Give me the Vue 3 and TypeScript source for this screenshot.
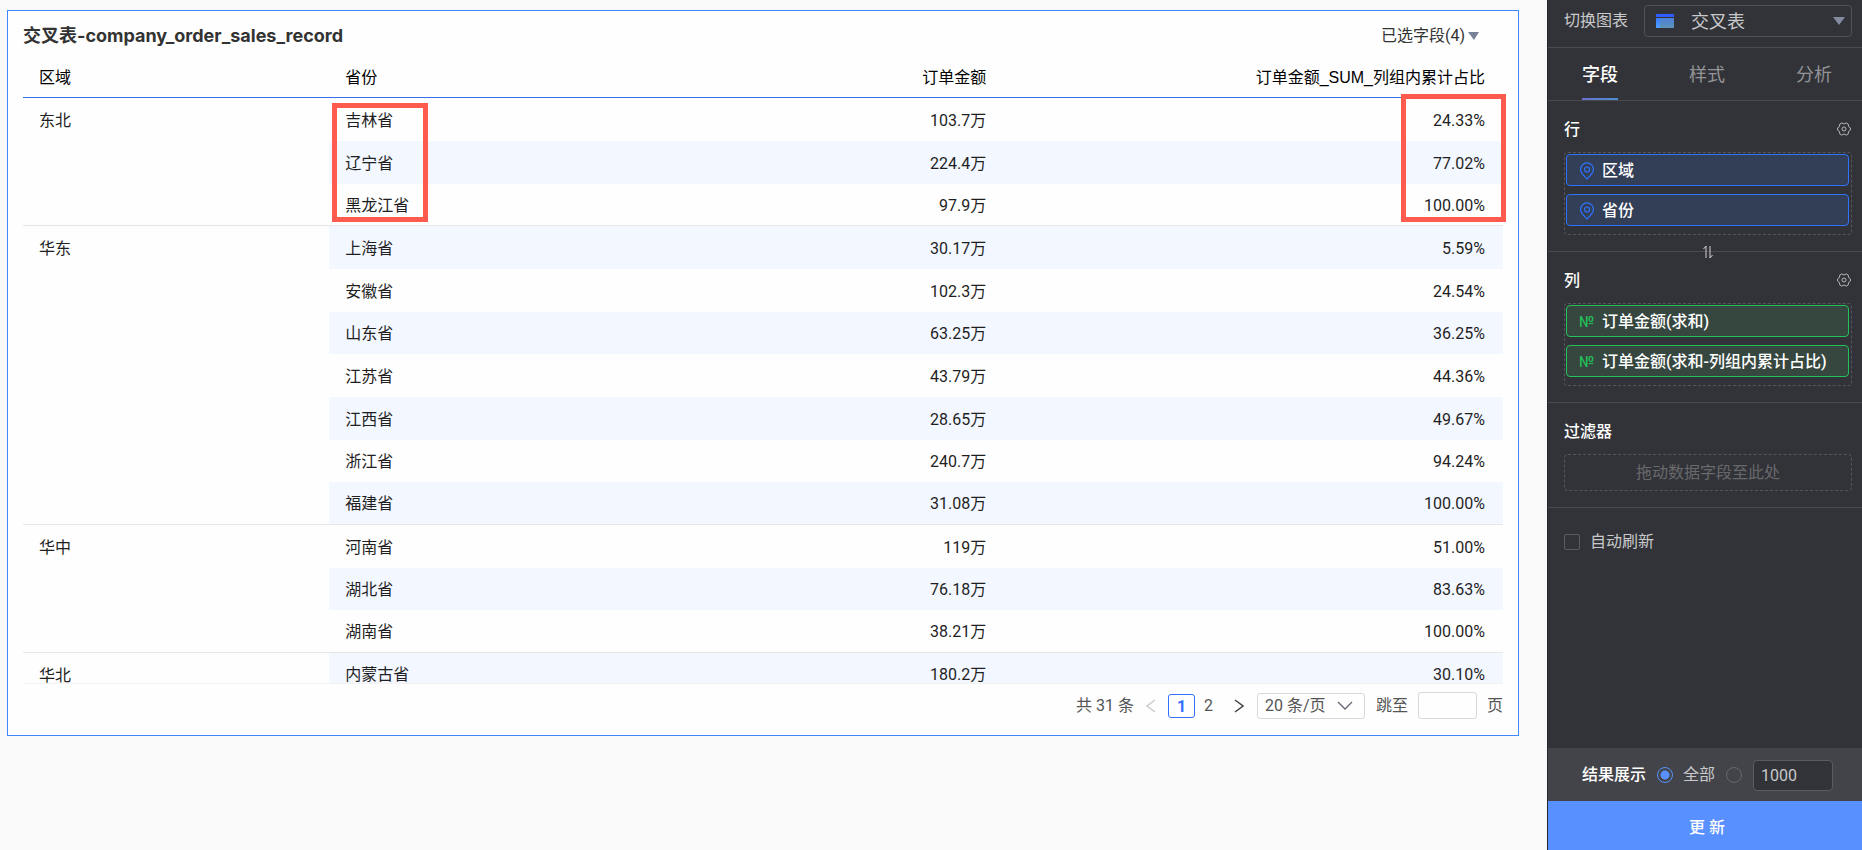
<script setup lang="ts">
import { computed, ref } from 'vue'

interface Province { name: string; amount: string; ratio: string }
interface Region { name: string; provinces: Province[] }

const p = (name: string, amount: string, ratio: string): Province => ({ name, amount, ratio })

const regions: Region[] = [
  { name: '东北', provinces: [p('吉林省', '103.7万', '24.33%'), p('辽宁省', '224.4万', '77.02%'), p('黑龙江省', '97.9万', '100.00%')] },
  {
    name: '华东',
    provinces: [
      p('上海省', '30.17万', '5.59%'), p('安徽省', '102.3万', '24.54%'), p('山东省', '63.25万', '36.25%'),
      p('江苏省', '43.79万', '44.36%'), p('江西省', '28.65万', '49.67%'), p('浙江省', '240.7万', '94.24%'),
      p('福建省', '31.08万', '100.00%'),
    ],
  },
  { name: '华中', provinces: [p('河南省', '119万', '51.00%'), p('湖北省', '76.18万', '83.63%'), p('湖南省', '38.21万', '100.00%')] },
  { name: '华北', provinces: [p('内蒙古省', '180.2万', '30.10%')] },
]

const rows = computed(() =>
  regions.flatMap((r) =>
    r.provinces.map((item, i) => ({
      ...item,
      region: i === 0 ? r.name : '',
      span: r.provinces.length,
      last: i === r.provinces.length - 1,
    })),
  ),
)

const gearPath =
  'M13.400 5.900v2.200L11.600 9.400 11.200 12 9.200 13.100 7 12 4.800 13.100 2.800 12 2.400 9.400.6 8.100V5.900l1.800-1.300L2.800 2 4.800.9 7 2 9.200.9l2 1.100.4 2.600z'

const tabs = ['字段', '样式', '分析']
const activeTab = ref('字段')
const dimensions = ['区域', '省份']
const measures = ['订单金额(求和)', '订单金额(求和-列组内累计占比)']
const autoRefresh = ref(false)
const resultMode = ref('all')
const limit = ref('1000')
const jump = ref('')
</script>

<template>
  <div class="page">
    <main class="canvas">
      <section class="card">
        <header class="card-head">
          <h1>交叉表-company_order_sales_record</h1>
          <button class="picked" type="button">
            已选字段(4)
            <svg width="12" height="8" viewBox="0 0 12 8"><path d="M0 0h11L6 8z" fill="#778096" /></svg>
          </button>
        </header>
        <div class="table-area">
          <div class="table-view">
            <table>
              <colgroup><col class="c-region" /><col class="c-prov" /><col class="c-amount" /><col class="c-ratio" /></colgroup>
              <thead>
                <tr><th>区域</th><th>省份</th><th class="num">订单金额</th><th class="num">订单金额_SUM_列组内累计占比</th></tr>
              </thead>
              <tbody>
                <tr v-for="row in rows" :key="row.name" :class="{ last: row.last }">
                  <td v-if="row.region" :rowspan="row.span" class="region">{{ row.region }}</td>
                  <td class="v">{{ row.name }}</td>
                  <td class="v num">{{ row.amount }}</td>
                  <td class="v num">{{ row.ratio }}</td>
                </tr>
              </tbody>
            </table>
          </div>
          <div class="mark mark-prov"></div>
          <div class="mark mark-ratio"></div>
        </div>
        <nav class="pager" aria-label="分页">
          <span>共 31 条</span>
          <button class="arrow off" type="button" aria-label="上一页" disabled>
            <svg width="10" height="14" viewBox="0 0 10 14"><path d="M9 1 1 7l8 6" /></svg>
          </button>
          <button class="num-btn current" type="button">1</button>
          <button class="num-btn" type="button">2</button>
          <button class="arrow next" type="button" aria-label="下一页">
            <svg width="10" height="14" viewBox="0 0 10 14"><path d="m1 1 8 6-8 6" /></svg>
          </button>
          <span class="size">
            <select aria-label="每页条数"><option>20 条/页</option></select>
            <svg width="16" height="10" viewBox="0 0 16 10"><path d="m1 1 7 7 7-7" /></svg>
          </span>
          <label class="jump">跳至<input v-model="jump" type="text" />页</label>
        </nav>
      </section>
    </main>

    <aside class="side">
      <div class="switcher">
        <label for="chart">切换图表</label>
        <span class="chart-box">
          <svg width="18" height="14" viewBox="0 0 18 14">
            <defs>
              <linearGradient id="ga" x1="0" y1="0" x2="0" y2="1"><stop offset="0" stop-color="#3a7bff" /><stop offset="1" stop-color="#4fa0ff" /></linearGradient>
              <linearGradient id="gb" x1="0" y1="0" x2="0" y2="1"><stop offset="0" stop-color="#4a80d8" /><stop offset="1" stop-color="#5c93b8" /></linearGradient>
            </defs>
            <path d="M0 0h18v3H0z" fill="#2f5cff" />
            <path d="M0 4h4v10H0z" fill="url(#ga)" />
            <path d="M4 4h14v10H4z" fill="url(#gb)" />
          </svg>
          <select id="chart"><option>交叉表</option></select>
          <svg width="12" height="8" viewBox="0 0 12 8"><path d="M0 0h12L6 8z" fill="#848b9e" /></svg>
        </span>
      </div>

      <div class="tabs" role="tablist">
        <button v-for="t in tabs" :key="t" type="button" role="tab" :aria-selected="t === activeTab" :class="{ on: t === activeTab }" @click="activeTab = t">{{ t }}</button>
      </div>

      <section class="block">
        <div class="block-head">
          <h2>行</h2>
          <button class="gear" type="button" aria-label="行设置">
            <svg width="14" height="14" viewBox="0 0 14 14"><path :d="gearPath" /><circle cx="7" cy="7" r="2" /></svg>
          </button>
        </div>
        <div class="drop">
          <div v-for="d in dimensions" :key="d" class="chip dim">
            <svg width="16" height="18" viewBox="0 0 16 18"><path d="M8 17C4.500 13.500 1.500 10.700 1.500 7.400a6.500 6.500 0 0 1 13 0C14.500 10.700 11.500 13.500 8 17z" /><circle cx="8" cy="7.500" r="2.500" /></svg>
            <span>{{ d }}</span>
          </div>
        </div>
        <button class="swap" type="button" aria-label="行列互换">
          <svg width="10" height="14" viewBox="0 0 10 14"><path d="M.5 4 3 1v12M9.500 10 7 13V1" /></svg>
        </button>
      </section>

      <section class="block">
        <div class="block-head">
          <h2>列</h2>
          <button class="gear" type="button" aria-label="列设置">
            <svg width="14" height="14" viewBox="0 0 14 14"><path :d="gearPath" /><circle cx="7" cy="7" r="2" /></svg>
          </button>
        </div>
        <div class="drop">
          <div v-for="m in measures" :key="m" class="chip mea">
            <span class="no">№</span>
            <span>{{ m }}</span>
          </div>
        </div>
      </section>

      <section class="block">
        <div class="block-head"><h2>过滤器</h2></div>
        <div class="drop empty">拖动数据字段至此处</div>
      </section>

      <label class="auto"><input v-model="autoRefresh" type="checkbox" />自动刷新</label>

      <footer class="result">
        <strong>结果展示</strong>
        <label><input v-model="resultMode" type="radio" name="result" value="all" />全部</label>
        <input v-model="resultMode" type="radio" name="result" value="limit" aria-label="限制条数" />
        <input v-model="limit" class="limit" type="text" aria-label="条数" />
      </footer>
      <button class="update" type="button">更 新</button>
    </aside>
  </div>
</template>

<style>
body {
  margin: 0;
}
</style>

<style scoped>
.page,
.page * {
  box-sizing: border-box;
}
.page {
  display: flex;
  min-height: 100vh;
  background: #f9f9f9;
  color: #1f1f1f;
  font-family: Roboto, "Noto Sans CJK SC", sans-serif;
  font-size: 16px;
  line-height: 24px;
}
button,
input,
select {
  margin: 0;
  padding: 0;
  border: 0;
  background: none;
  color: inherit;
  font: inherit;
  appearance: none;
  outline: none;
}
svg {
  display: block;
  flex: none;
  fill: none;
}
.canvas {
  flex: 1;
  min-width: 0;
  padding: 10px 28px 0 7px;
}
.card {
  padding: 0 15px 8px;
  border: 1px solid #4088ff;
  background: #fefefe;
}
.card-head {
  display: flex;
  align-items: center;
  justify-content: space-between;
  height: 48px;
  padding: 2px 23px 0 0;
}
h1 {
  margin: 0;
  color: #333;
  font-family: Inter, "Noto Sans CJK SC", sans-serif;
  font-size: 18px;
  font-weight: 700;
}
.picked {
  display: flex;
  align-items: center;
  gap: 3px;
  color: #333;
}
.table-area {
  position: relative;
}
.table-view {
  height: 625px;
  overflow: hidden;
  border-bottom: 1px solid #f2f2f2;
}
table {
  width: 100%;
  table-layout: fixed;
  border-collapse: separate;
  border-spacing: 0;
}
.c-region { width: 20.7%; }
.c-prov { width: 22.8%; }
.c-amount { width: 22.8%; }
.c-ratio { width: 33.7%; }
th {
  height: 39px;
  padding: 0 18px 0 16px;
  border-bottom: 1px solid #3370e8;
  color: #000;
  font-family: "Liberation Sans", "Noto Sans CJK SC", sans-serif;
  font-weight: 400;
  text-align: left;
}
tbody tr {
  height: 43px;
}
tbody tr:nth-child(3n) {
  height: 42px;
}
td {
  padding: 2px 18px 0 16px;
}
.num {
  text-align: right;
}
.region {
  padding-top: 11px;
  border-bottom: 1px solid #e6e6e6;
  vertical-align: top;
}
tr.last .v {
  border-bottom: 1px solid #e6e6e6;
}
tbody tr:nth-child(even) .v {
  background: #f3f7ff;
}
.mark {
  position: absolute;
  border: 5px solid #ff5a4e;
}
.mark-prov {
  top: 44px;
  left: 309px;
  width: 96px;
  height: 119px;
}
.mark-ratio {
  top: 35px;
  right: -3px;
  width: 105px;
  height: 128px;
}
.pager {
  display: flex;
  align-items: center;
  justify-content: flex-end;
  height: 43px;
  color: #555;
}
.arrow {
  margin: 0 12px;
}
.arrow svg {
  stroke: #444;
  stroke-width: 1.500;
}
.arrow.off svg {
  stroke: #ccc;
}
.num-btn {
  width: 27px;
  height: 24px;
}
.num-btn.current {
  border: 1px solid #3370ff;
  border-radius: 3px;
  color: #3370ff;
  font-weight: 700;
}
.arrow.next {
  margin-right: 13px;
}
.size {
  display: flex;
  align-items: center;
  width: 108px;
  height: 26px;
  padding-right: 11px;
  border: 1px solid #d9d9d9;
  border-radius: 3px;
}
.size select {
  flex: 1;
  min-width: 0;
  padding-left: 7px;
}
.size svg {
  stroke: #667;
  stroke-width: 1.300;
}
.jump {
  display: flex;
  align-items: center;
  gap: 10px;
  margin-left: 11px;
}
.jump input {
  width: 59px;
  height: 27px;
  border: 1px solid #d9d9d9;
  border-radius: 3px;
}
.side {
  display: flex;
  flex-direction: column;
  flex: none;
  width: 315px;
  border-left: 1px solid #25262a;
  background: #323338;
  color: #c9c9cb;
}
.switcher {
  display: flex;
  align-items: center;
  justify-content: space-between;
  height: 48px;
  padding: 0 10px 5px 16px;
  border-bottom: 1px solid #4a4b50;
}
.chart-box {
  display: flex;
  align-items: center;
  width: 208px;
  height: 32px;
  padding: 0 6px 0 11px;
  border: 1px solid #515257;
  border-radius: 4px;
}
.chart-box select {
  flex: 1;
  min-width: 0;
  padding: 2px 0 0 17px;
  font-size: 18px;
}
.tabs {
  display: flex;
  justify-content: space-between;
  height: 53px;
  padding: 0 30px 0 34px;
  border-bottom: 1px solid #4a4b50;
}
.tabs button {
  padding-top: 3px;
  color: #939497;
  font-size: 18px;
  border-bottom: 2px solid transparent;
}
.tabs .on {
  color: #fff;
  font-weight: 500;
  border-image: linear-gradient(90deg, #6b6fd0, #4a90d0) 1;
}
.block {
  position: relative;
  padding: 16px 10px 16px 16px;
  border-bottom: 1px solid #4a4b50;
}
.block-head {
  display: flex;
  align-items: center;
  justify-content: space-between;
  height: 24px;
  margin-bottom: 11px;
  padding-right: 1px;
}
h2 {
  margin: 0;
  padding-top: 2px;
  color: #fff;
  font-size: 16px;
  font-weight: 500;
}
.gear svg {
  stroke: #b5b6b9;
}
.drop {
  display: flex;
  flex-direction: column;
  gap: 8px;
  padding: 1px 2px 8px 1px;
  border: 1px dashed #55565b;
  border-radius: 4px;
}
.drop.empty {
  align-items: center;
  padding: 6px 0 5px;
  color: #68696d;
}
.chip {
  display: flex;
  align-items: center;
  gap: 7px;
  height: 32px;
  padding: 1px 0 0 12px;
  border: 1px solid #2f74ff;
  border-radius: 4px;
  color: #fff;
  font-weight: 500;
}
.dim {
  background: #333e57;
}
.dim svg {
  stroke: #2f74ff;
  stroke-width: 1.200;
}
.mea {
  border-color: #22c35b;
  background: #36473f;
}
.no {
  width: 16px;
  color: #22c35b;
  font-family: Inter, sans-serif;
  font-size: 14px;
  font-weight: 500;
}
.swap {
  position: absolute;
  bottom: -8px;
  left: 50%;
  margin-left: -2px;
}
.swap svg {
  stroke: #d0d0d2;
}
.auto {
  display: flex;
  align-items: center;
  gap: 10px;
  padding: 22px 16px;
}
.auto input {
  width: 16px;
  height: 16px;
  border: 1px solid #5b5c61;
  border-radius: 2px;
}
.auto input:checked {
  border-color: #5890ff;
  background: #5890ff;
}
.result {
  display: flex;
  align-items: center;
  height: 53px;
  margin-top: auto;
  padding: 1px 0 0 34px;
  background: #434449;
}
.result strong {
  margin-right: 11px;
  color: #fff;
  font-weight: 500;
}
.result label {
  display: flex;
  align-items: center;
  gap: 10px;
  margin-right: 11px;
}
.result input[type='radio'] {
  width: 16px;
  height: 16px;
  border: 1px solid #66676b;
  border-radius: 50%;
}
.result input[type='radio']:checked {
  border-color: #5890ff;
  background: radial-gradient(circle, #5890ff 4px, transparent 5px);
}
.result .limit {
  width: 80px;
  height: 31px;
  margin-left: 11px;
  padding: 0 7px;
  border: 1px solid #5b5c61;
  border-radius: 4px;
  background: #323338;
}
.update {
  height: 49px;
  padding: 4px 0 0 4px;
  background: #5890ff;
  color: #fff;
  font-weight: 500;
}
</style>
